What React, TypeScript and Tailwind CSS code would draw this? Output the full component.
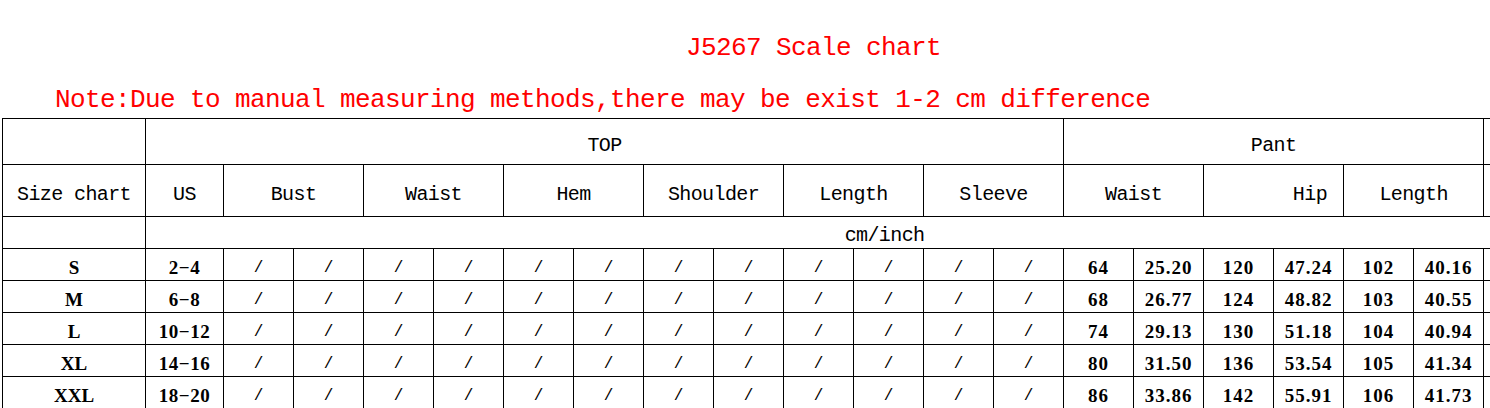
import React from "react";

const mono = "font-['Liberation_Mono',monospace]";
const serif = "font-['Liberation_Serif',serif]";

const sizes = [
  { size: "S", us: "2-4", pant: ["64", "25.20", "120", "47.24", "102", "40.16"] },
  { size: "M", us: "6-8", pant: ["68", "26.77", "124", "48.82", "103", "40.55"] },
  { size: "L", us: "10-12", pant: ["74", "29.13", "130", "51.18", "104", "40.94"] },
  { size: "XL", us: "14-16", pant: ["80", "31.50", "136", "53.54", "105", "41.34"] },
  { size: "XXL", us: "18-20", pant: ["86", "33.86", "142", "55.91", "106", "41.73"] },
];

const topParts = ["Bust", "Waist", "Hem", "Shoulder", "Length", "Sleeve"];

const cell = "border border-black p-0 text-center align-middle leading-[20px]";
const head = `${mono} text-[20px] tracking-[-0.6px] pt-[8px]`;
const num = `${serif} font-bold text-[19px] pt-[6px]`;

export default function App() {
  return (
    <div className="w-[1490px] h-[408px] overflow-hidden bg-white text-black">
      <div className={`${mono} text-[#ff0000] pt-[33px] pl-[686px] h-[63px] text-[26px] leading-[30px] tracking-[-0.6px]`}>
        J5267 Scale chart
      </div>
      <div className={`${mono} text-[#ff0000] mt-[22px] pl-[55px] h-[30px] text-[26px] leading-[30px] tracking-[-0.6px] whitespace-nowrap`}>
        Note:Due to manual measuring methods,there may be exist 1-2 cm difference
      </div>
      <div className="mt-[3px] pl-[2px]">
        <table className="table-fixed border-collapse w-[1621px]">
          <colgroup>
            <col className="w-[143px]" />
            <col className="w-[78px]" />
            {Array.from({ length: 20 }).map((_, i) => (
              <col key={i} className="w-[70px]" />
            ))}
          </colgroup>
          <tbody>
            <tr className="h-[46px]">
              <td className={cell}></td>
              <td colSpan={13} className={`${cell} ${head}`}>
                TOP
              </td>
              <td colSpan={6} className={`${cell} ${head}`}>
                Pant
              </td>
              <td colSpan={2} className={cell}></td>
            </tr>
            <tr className="h-[52px]">
              <td className={`${cell} ${head} whitespace-nowrap`}>Size chart</td>
              <td className={`${cell} ${head}`}>US</td>
              {topParts.map((p) => (
                <td key={p} colSpan={2} className={`${cell} ${head}`}>
                  {p}
                </td>
              ))}
              <td colSpan={2} className={`${cell} ${head}`}>Waist</td>
              <td colSpan={2} className={`${cell} ${head} text-right pr-[16px]`}>Hip</td>
              <td colSpan={2} className={`${cell} ${head}`}>Length</td>
              <td colSpan={2} className={cell}></td>
            </tr>
            <tr className="h-[32px]">
              <td className={cell}></td>
              <td colSpan={21} className={`${cell} ${mono} text-[20px] tracking-[-0.6px] pt-[7px]`}>
                cm/inch
              </td>
            </tr>
            {sizes.map((r) => (
              <tr key={r.size} className="h-[32px]">
                <td className={`${cell} ${num}`}>{r.size}</td>
                <td className={`${cell} ${num} tracking-[0.5px]`}>{r.us.replace("-", "\u2212")}</td>
                {Array.from({ length: 12 }).map((_, i) => (
                  <td key={i} className={`${cell} ${mono} text-[16px] pt-[6px]`}>/</td>
                ))}
                {r.pant.map((v, i) => (
                  <td key={i} className={`${cell} ${num} tracking-[1px]`}>{v}</td>
                ))}
                <td className={cell}></td>
                <td className={cell}></td>
              </tr>
            ))}
          </tbody>
        </table>
      </div>
    </div>
  );
}
